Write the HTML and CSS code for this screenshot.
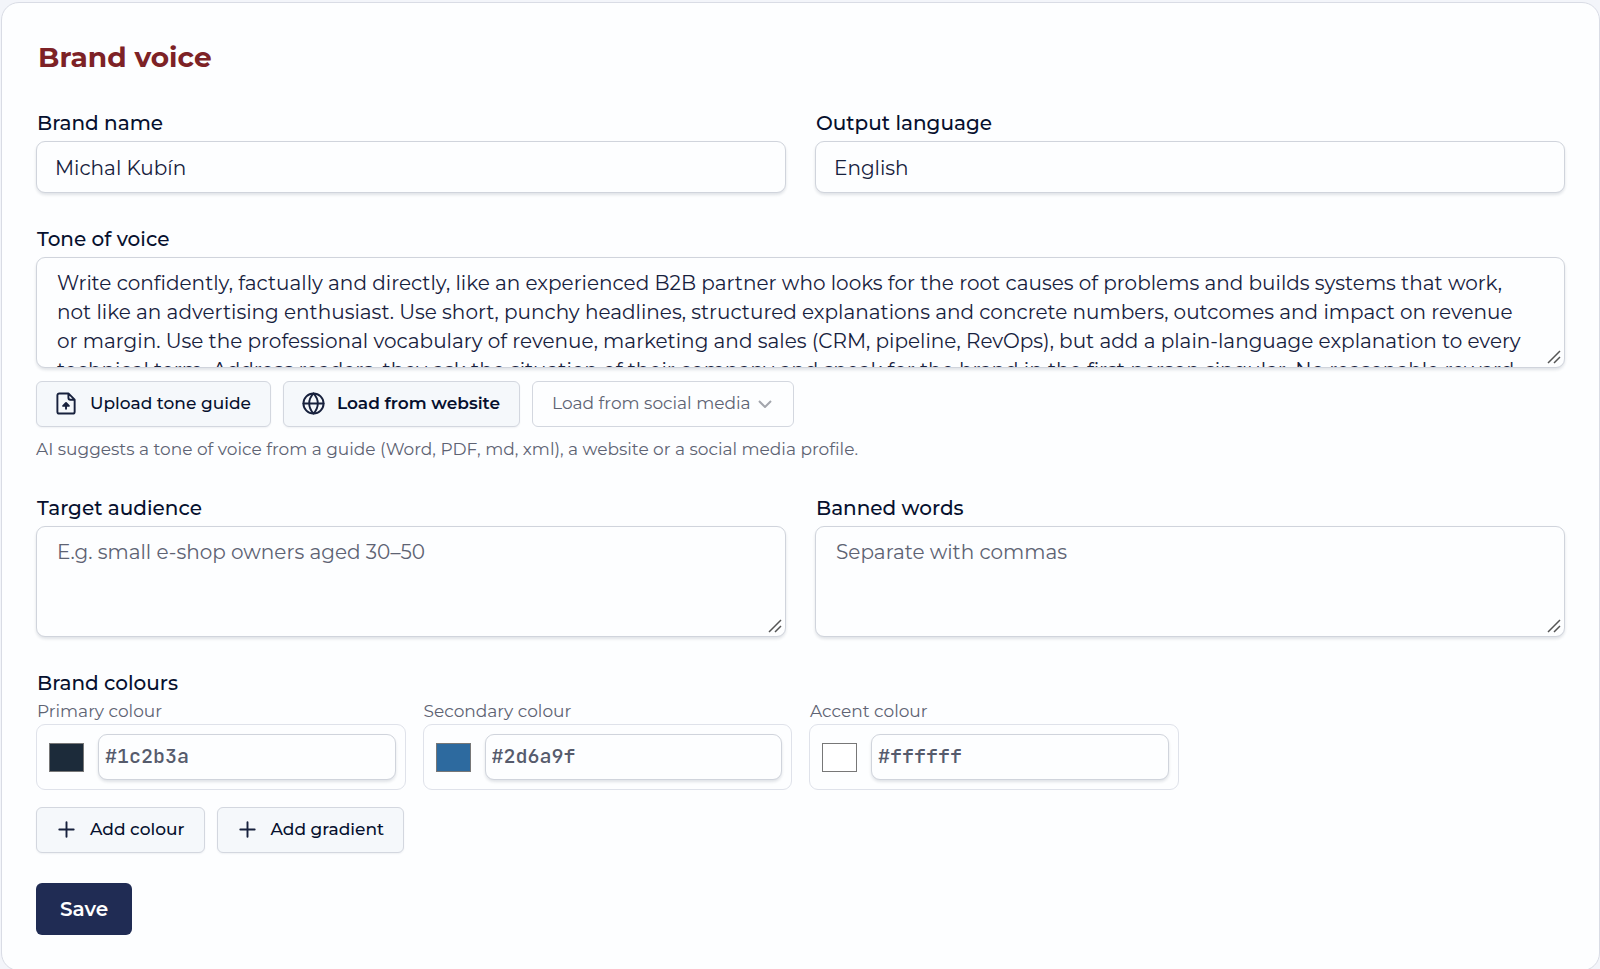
FILE: index.html
```html
<!DOCTYPE html>
<html lang="en">
<head>
<meta charset="utf-8">
<meta name="viewport" content="width=device-width, initial-scale=1">
<title>Brand voice</title>
<link rel="stylesheet" href="styles.css">
</head>
<body>
<main class="card">
  <h1 class="title">Brand voice</h1>
  <form class="form">
    <div class="row">
      <div class="field">
        <label class="label" for="brand-name">Brand name</label>
        <input class="control" id="brand-name" type="text" value="Michal Kubín">
      </div>
      <div class="field">
        <label class="label" for="language">Output language</label>
        <input class="control" id="language" type="text" value="English">
      </div>
    </div>

    <div class="field">
      <label class="label" for="tone">Tone of voice</label>
      <div class="area-wrap">
        <textarea class="control area" id="tone" wrap="off">Write confidently, factually and directly, like an experienced B2B partner who looks for the root causes of problems and builds systems that work,
not like an advertising enthusiast. Use short, punchy headlines, structured explanations and concrete numbers, outcomes and impact on revenue
or margin. Use the professional vocabulary of revenue, marketing and sales (CRM, pipeline, RevOps), but add a plain-language explanation to every
technical term. Address readers, they ask the situation of their company and speak for the brand in the first person singular. No reasonable reward</textarea>
        <svg class="grip" viewBox="0 0 14 14" aria-hidden="true"><path d="M1 13 13 1M7 13l6-6"/></svg>
      </div>
      <div class="actions actions-tone">
        <button class="btn" type="button">
          <svg class="icon" viewBox="0 0 24 24" aria-hidden="true"><path d="M14 1.500H4.500A2 2 0 0 0 2.500 3.500v17a2 2 0 0 0 2 2h14a2 2 0 0 0 2-2V8zM14 1.500v4.500a2 2 0 0 0 2 2h4.500M11.500 17.500v-5M8.500 14.500l3-3 3 3z"/></svg>
          Upload tone guide
        </button>
        <button class="btn btn-strong" type="button">
          <svg class="icon" viewBox="0 0 24 24" aria-hidden="true"><circle cx="12" cy="12" r="10.500"/><path d="M1.500 12h21M12 1.500c-6 6.500-6 14.500 0 21M12 1.500c6 6.500 6 14.500 0 21"/></svg>
          Load from website
        </button>
        <div class="select-wrap">
          <select class="select" aria-label="Load from social media"><option>Load from social media</option></select>
          <svg class="chevron" viewBox="0 0 14 8" aria-hidden="true"><path d="m1 1 6 6 6-6"/></svg>
        </div>
      </div>
      <p class="hint">AI suggests a tone of voice from a guide (Word, PDF, md, xml), a website or a social media profile.</p>
    </div>

    <div class="row">
      <div class="field">
        <label class="label" for="audience">Target audience</label>
        <div class="area-wrap">
          <textarea class="control area" id="audience" placeholder="E.g. small e-shop owners aged 30–50"></textarea>
          <svg class="grip" viewBox="0 0 14 14" aria-hidden="true"><path d="M1 13 13 1M7 13l6-6"/></svg>
        </div>
      </div>
      <div class="field">
        <label class="label" for="banned">Banned words</label>
        <div class="area-wrap">
          <textarea class="control area" id="banned" placeholder="Separate with commas"></textarea>
          <svg class="grip" viewBox="0 0 14 14" aria-hidden="true"><path d="M1 13 13 1M7 13l6-6"/></svg>
        </div>
      </div>
    </div>

    <fieldset class="colours">
      <legend class="label">Brand colours</legend>
      <div class="colour-grid">
        <div>
          <label class="sublabel" for="primary">Primary colour</label>
          <div class="colour-box">
            <input class="swatch" type="color" value="#1c2b3a" aria-label="Pick primary colour">
            <input class="control hex" id="primary" type="text" value="#1c2b3a">
          </div>
        </div>
        <div>
          <label class="sublabel" for="secondary">Secondary colour</label>
          <div class="colour-box">
            <input class="swatch" type="color" value="#2d6a9f" aria-label="Pick secondary colour">
            <input class="control hex" id="secondary" type="text" value="#2d6a9f">
          </div>
        </div>
        <div>
          <label class="sublabel" for="accent">Accent colour</label>
          <div class="colour-box">
            <input class="swatch" type="color" value="#ffffff" aria-label="Pick accent colour">
            <input class="control hex" id="accent" type="text" value="#ffffff">
          </div>
        </div>
      </div>
      <div class="actions">
        <button class="btn" type="button">
          <svg class="icon" viewBox="0 0 24 24" aria-hidden="true"><path d="M4.500 12h15M12 4.500v15"/></svg>
          Add colour
        </button>
        <button class="btn" type="button">
          <svg class="icon" viewBox="0 0 24 24" aria-hidden="true"><path d="M4.500 12h15M12 4.500v15"/></svg>
          Add gradient
        </button>
      </div>
    </fieldset>

    <button class="save" type="submit">Save</button>
  </form>
</main>
</body>
</html>
```
FILE: styles.css
```css
* {
  box-sizing: border-box;
}

body {
  margin: 0;
  padding: 2px 0 0 1px;
  background: #f3f5fa;
  color: #0b1533;
  font-family: Montserrat, Inter, "Open Sans", sans-serif;
}

input,
textarea,
select,
button {
  font-family: inherit;
  color: inherit;
  margin: 0;
}

.card {
  padding: 35px 34px;
  background: #fdfeff;
  border: 1px solid #d9dce5;
  border-radius: 18px;
}

.title {
  margin: 0 0 31px;
  padding-left: 2px;
  font-size: 28px;
  line-height: 38px;
  font-weight: 700;
  color: #7d2226;
}

.form {
  display: flex;
  flex-direction: column;
  gap: 30px;
}

.row {
  display: grid;
  grid-template-columns: 1fr 1fr;
  gap: 29px;
}

.label {
  display: block;
  padding: 0 0 2px 1px;
  font-size: 20px;
  line-height: 32px;
  font-weight: 500;
  color: #06102e;
}

.control {
  display: block;
  width: 100%;
  height: 52px;
  padding: 1px 18px 0;
  border: 1px solid #d0d4dc;
  border-radius: 9px;
  background: #fdfeff;
  box-shadow: 0 2px 3px rgba(20, 30, 60, 0.12);
  font-size: 20px;
  color: #17213d;
  outline: none;
}

.area-wrap {
  position: relative;
}

.area {
  height: 111px;
  padding: 11px 20px 0;
  line-height: 29px;
  resize: none;
  overflow: hidden;
}

.control::placeholder {
  color: #5e6373;
  opacity: 1;
}

.grip {
  position: absolute;
  right: 4px;
  bottom: 4px;
  width: 14px;
  height: 14px;
  fill: none;
  stroke: #555;
  stroke-width: 1.5;
}

.actions {
  display: flex;
  flex-wrap: wrap;
  gap: 12px;
}

.actions-tone {
  margin-top: 13px;
}

.btn {
  display: flex;
  align-items: center;
  gap: 12px;
  height: 46px;
  padding: 0 19px 2px 18px;
  border: 1px solid #d3d7df;
  border-radius: 6px;
  background: #f5f8fb;
  box-shadow: 0 1px 2px rgba(20, 30, 60, 0.06);
  font-size: 17px;
  font-weight: 500;
  color: #06102e;
}

.btn-strong {
  font-weight: 600;
}

.icon {
  width: 23px;
  height: 23px;
  fill: none;
  stroke: #17213d;
  stroke-width: 2;
  stroke-linecap: round;
  stroke-linejoin: round;
}

.select-wrap {
  position: relative;
}

.select {
  appearance: none;
  height: 46px;
  padding: 0 42px 2px 19px;
  border: 1px solid #d3d7df;
  border-radius: 6px;
  background: #fdfeff;
  font-size: 17px;
  color: #5e6373;
}

.chevron {
  position: absolute;
  right: 22px;
  top: 19px;
  width: 14px;
  height: 8px;
  fill: none;
  stroke: #a3a6ad;
  stroke-width: 2;
  pointer-events: none;
}

.hint {
  margin: 9px 0 0;
  font-size: 17px;
  line-height: 26px;
  color: #5e6373;
}

.colours {
  min-width: 0;
  margin: 0;
  padding: 0;
  border: 0;
}

.colours > .label {
  padding-bottom: 0;
}

.colour-grid {
  display: grid;
  grid-template-columns: repeat(4, 1fr);
  gap: 17px;
  margin-bottom: 17px;
}

.sublabel {
  display: block;
  padding-left: 1px;
  font-size: 17px;
  line-height: 25px;
  color: #5e6373;
}

.colour-box {
  display: flex;
  align-items: center;
  gap: 14px;
  padding: 9px 9px 9px 12px;
  border: 1px solid #dfe2ea;
  border-radius: 9px;
}

.swatch {
  appearance: none;
  flex: none;
  width: 35px;
  height: 29px;
  padding: 0;
  border: 1px solid #777;
  background: none;
}

.swatch::-webkit-color-swatch-wrapper {
  padding: 0;
}

.swatch::-webkit-color-swatch {
  border: 0;
}

.hex {
  flex: 1;
  min-width: 0;
  height: 46px;
  padding: 0 6px 2px;
  font-family: "JetBrains Mono", "DejaVu Sans Mono", monospace;
  font-size: 20px;
  font-weight: 500;
  color: #565b6c;
}

.save {
  align-self: flex-start;
  height: 52px;
  padding: 0 24px;
  border: 0;
  border-radius: 6px;
  background: #202c54;
  font-size: 20px;
  font-weight: 600;
  color: #fff;
}
```
